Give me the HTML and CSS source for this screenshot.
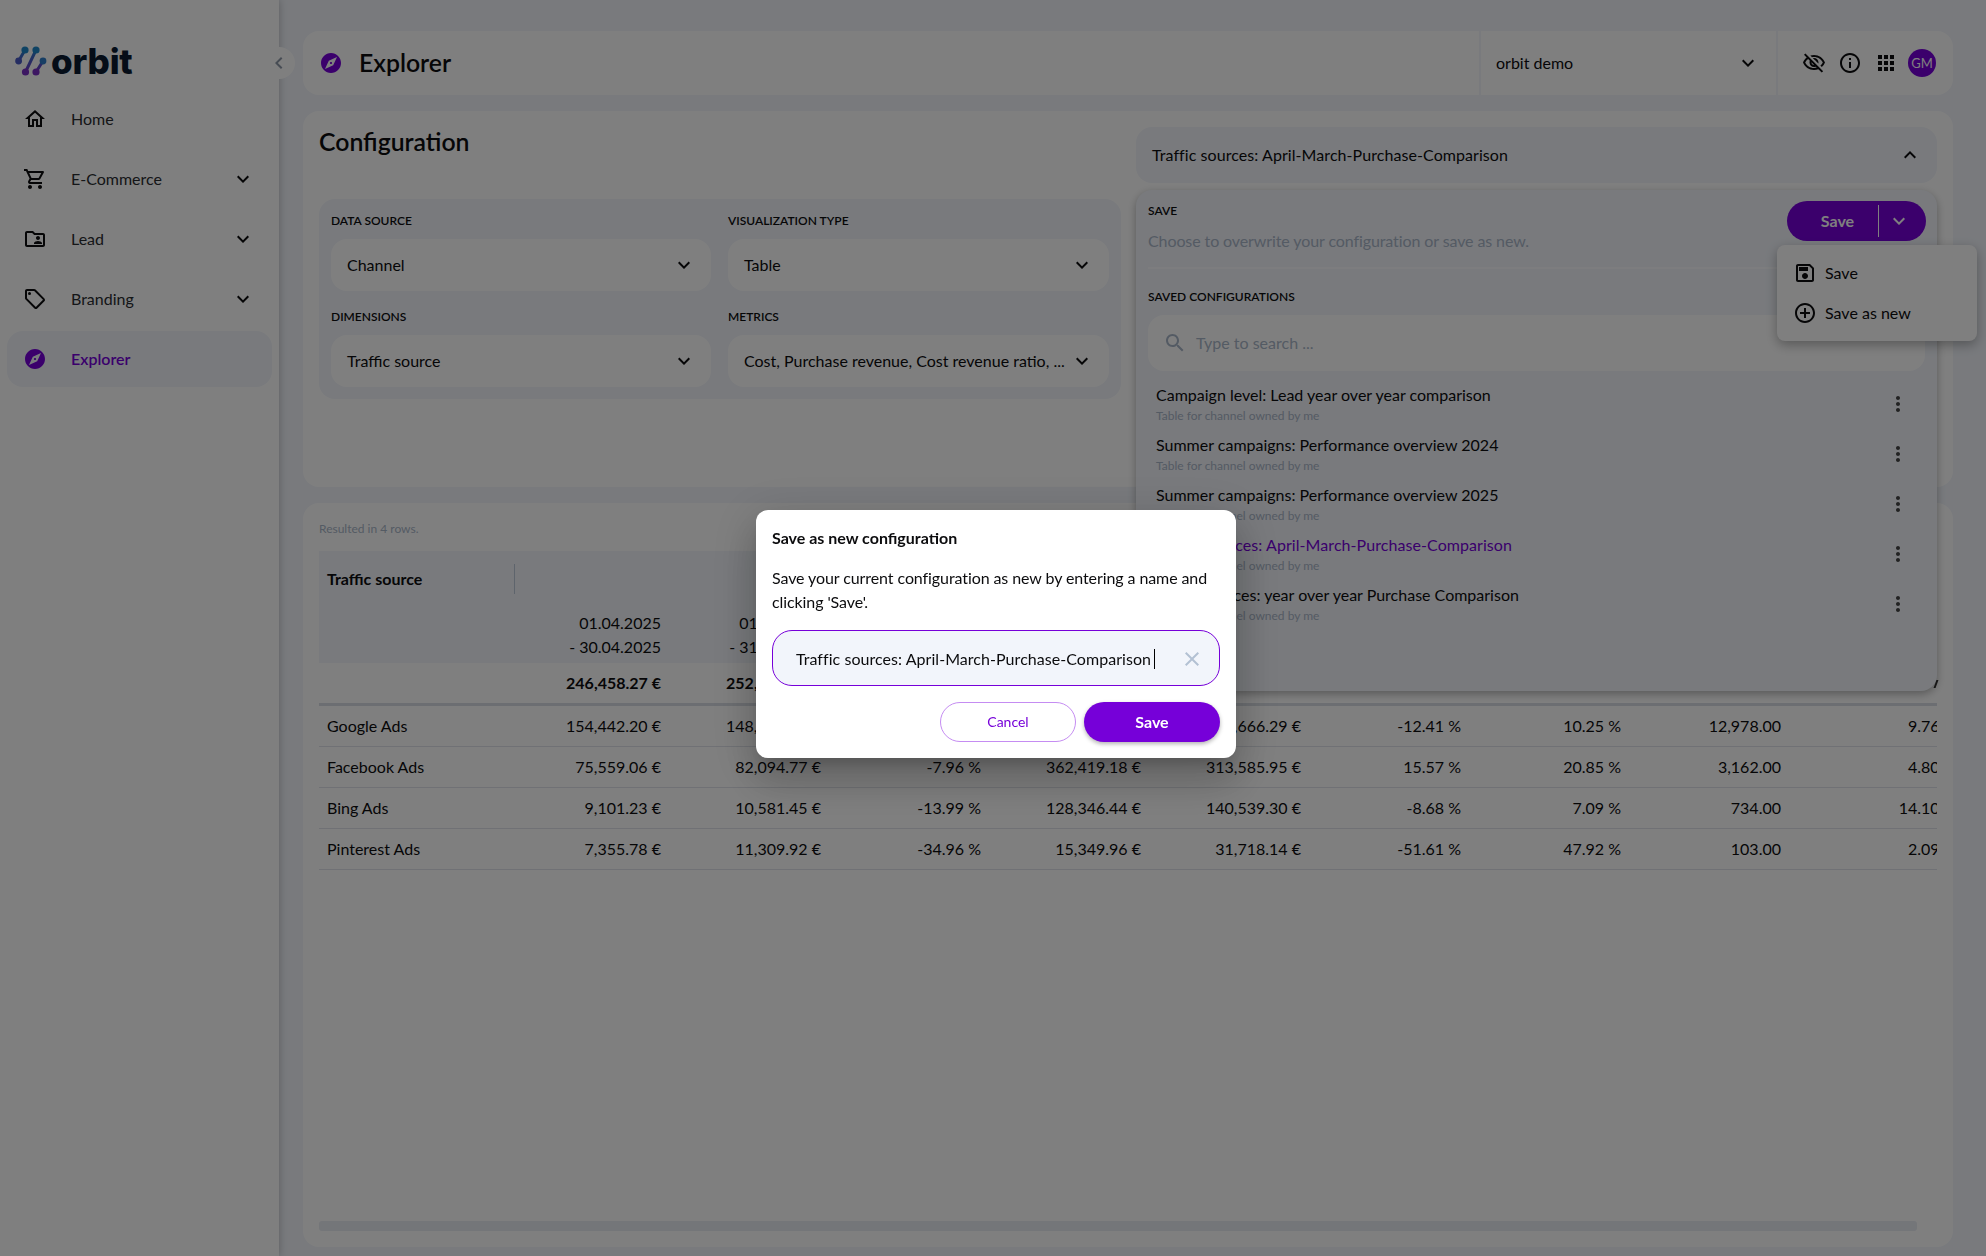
FILE: index.html
```html
<!DOCTYPE html>
<html lang="en">
<head>
<meta charset="utf-8">
<title>Explorer</title>
<link rel="stylesheet" href="styles.css">
</head>
<body>
<div class="app">
  <aside class="sidebar">
    <div class="logo">
      <svg class="logo-mark" viewBox="0 0 32 30" aria-hidden="true">
        <defs><linearGradient id="lg" gradientUnits="userSpaceOnUse" x1="0" y1="2" x2="0" y2="28"><stop offset="0" stop-color="#1f86c8"/><stop offset="1" stop-color="#7a2fc4"/></linearGradient></defs>
        <g fill="none" stroke="url(#lg)" stroke-width="3" stroke-linecap="round">
          <path d="M10 4L3.600 15"/><path d="M21 4L10.500 26"/><path d="M28 15L21 26"/>
        </g>
        <g>
          <circle cx="10" cy="4" r="3.600" fill="#1f86c8"/><circle cx="21" cy="4" r="3.600" fill="#1f86c8"/>
          <circle cx="3.600" cy="15" r="3.400" fill="#4b5bc4"/><circle cx="28" cy="15" r="3.400" fill="#2f7cc8"/>
          <circle cx="10.500" cy="26" r="3.600" fill="#7a2fc4"/><circle cx="21" cy="26" r="3.600" fill="#7a2fc4"/>
        </g>
      </svg>
      <span class="logo-text">orbit</span>
    </div>
    <nav class="nav">
      <a class="nav-item"><svg class="ic" viewBox="0 0 24 24"><path d="M12 5.690l5 4.500V18h-2v-6H9v6H7v-7.810l5-4.500M12 3L2 12h3v8h6v-6h2v6h6v-8h3L12 3z"/></svg><span>Home</span></a>
      <a class="nav-item"><svg class="ic" viewBox="0 0 24 24"><path d="M15.550 13c.75 0 1.410-.41 1.750-1.030l3.580-6.490c.37-.66-.11-1.480-.87-1.480H5.210l-.94-2H1v2h2l3.600 7.590-1.350 2.440C4.520 15.370 5.480 17 7 17h12v-2H7l1.100-2h7.450zM6.160 6h12.150l-2.760 5H8.530L6.160 6zM7 18c-1.100 0-1.990.9-1.990 2S5.900 22 7 22s2-.9 2-2-.9-2-2-2zm10 0c-1.100 0-1.990.9-1.990 2s.89 2 1.990 2 2-.9 2-2-.9-2-2-2z"/></svg><span>E-Commerce</span><svg class="ic chev" viewBox="0 0 24 24"><path d="M16.590 8.590L12 13.170 7.410 8.590 6 10l6 6 6-6z"/></svg></a>
      <a class="nav-item"><svg class="ic" viewBox="0 0 24 24"><path d="M20 6h-8l-2-2H4c-1.100 0-2 .9-2 2v12c0 1.100.9 2 2 2h16c1.100 0 2-.9 2-2V8c0-1.100-.9-2-2-2zm0 12H4V6h5.170l2 2H20v10zm-5-5c1.100 0 2-.9 2-2s-.9-2-2-2-2 .9-2 2 .9 2 2 2zm-4 4h8v-1c0-1.330-2.670-2-4-2s-4 .67-4 2v1z"/></svg><span>Lead</span><svg class="ic chev" viewBox="0 0 24 24"><path d="M16.590 8.590L12 13.170 7.410 8.590 6 10l6 6 6-6z"/></svg></a>
      <a class="nav-item"><svg class="ic" viewBox="0 0 24 24"><path d="M21.410 11.410l-8.830-8.830C12.210 2.210 11.700 2 11.170 2H4c-1.100 0-2 .9-2 2v7.170c0 .53.21 1.040.59 1.410l8.830 8.830c.78.78 2.050.78 2.830 0l7.170-7.170c.78-.78.78-2.040-.01-2.830zM12.830 20L4 11.170V4h7.170L20 12.830 12.830 20z"/><circle cx="6.500" cy="6.500" r="1.500"/></svg><span>Branding</span><svg class="ic chev" viewBox="0 0 24 24"><path d="M16.590 8.590L12 13.170 7.410 8.590 6 10l6 6 6-6z"/></svg></a>
      <a class="nav-item active"><svg class="ic" viewBox="0 0 24 24"><path d="M12 10.900c-.61 0-1.100.49-1.100 1.100s.49 1.100 1.100 1.100c.61 0 1.100-.49 1.100-1.100s-.49-1.100-1.100-1.100zM12 2C6.480 2 2 6.480 2 12s4.480 10 10 10 10-4.480 10-10S17.520 2 12 2zm2.190 12.190L6 18l3.810-8.190L18 6l-3.810 8.190z"/></svg><span>Explorer</span></a>
    </nav>
    <button class="collapse"><svg class="ic" viewBox="0 0 24 24"><path d="M15.410 7.410L14 6l-6 6 6 6 1.410-1.410L10.830 12z"/></svg></button>
  </aside>

  <main class="main">
    <header class="topbar">
      <div class="page-title">
        <svg class="ic purple" viewBox="0 0 24 24"><path d="M12 10.900c-.61 0-1.100.49-1.100 1.100s.49 1.100 1.100 1.100c.61 0 1.100-.49 1.100-1.100s-.49-1.100-1.100-1.100zM12 2C6.480 2 2 6.480 2 12s4.480 10 10 10 10-4.480 10-10S17.520 2 12 2zm2.190 12.190L6 18l3.810-8.190L18 6l-3.810 8.190z"/></svg>
        <h1>Explorer</h1>
      </div>
      <div class="account"><span>orbit demo</span><svg class="ic" viewBox="0 0 24 24"><path d="M16.590 8.590L12 13.170 7.410 8.590 6 10l6 6 6-6z"/></svg></div>
      <div class="tools">
        <svg class="ic" viewBox="0 0 24 24"><path d="M12 6c3.790 0 7.170 2.130 8.820 5.500-.59 1.220-1.420 2.270-2.410 3.120l1.410 1.410c1.390-1.230 2.490-2.770 3.180-4.530C21.270 7.110 17 4 12 4c-1.270 0-2.490.2-3.640.57l1.650 1.650C10.660 6.090 11.320 6 12 6zm-1.070 1.140L13 9.210c.57.25 1.030.71 1.280 1.280l2.070 2.070c.08-.34.14-.7.14-1.070C16.500 9.010 14.480 7 12 7c-.37 0-.72.05-1.070.14zM2.010 3.870l2.680 2.680C3.060 7.830 1.770 9.530 1 11.500 2.730 15.890 7 19 12 19c1.520 0 2.980-.29 4.320-.82l3.420 3.420 1.410-1.410L3.420 2.450 2.010 3.870zm7.500 7.500l2.610 2.610c-.04.01-.08.02-.12.02-1.380 0-2.500-1.120-2.500-2.500 0-.05.01-.08.01-.13zm-3.400-3.400l1.750 1.750c-.23.55-.36 1.150-.36 1.780 0 2.480 2.020 4.500 4.500 4.500.63 0 1.230-.13 1.770-.36l.98.98c-.88.24-1.800.38-2.750.38-3.790 0-7.170-2.130-8.820-5.500.7-1.430 1.720-2.610 2.930-3.530z"/></svg>
        <svg class="ic" viewBox="0 0 24 24"><path d="M11 7h2v2h-2zm0 4h2v6h-2zm1-9C6.480 2 2 6.480 2 12s4.480 10 10 10 10-4.480 10-10S17.520 2 12 2zm0 18c-4.410 0-8-3.590-8-8s3.590-8 8-8 8 3.590 8 8-3.590 8-8 8z"/></svg>
        <svg class="ic" viewBox="0 0 24 24"><path d="M4 8h4V4H4v4zm6 12h4v-4h-4v4zm-6 0h4v-4H4v4zm0-6h4v-4H4v4zm6 0h4v-4h-4v4zm6-10v4h4V4h-4zm-6 4h4V4h-4v4zm6 6h4v-4h-4v4zm0 6h4v-4h-4v4z"/></svg>
        <span class="avatar">GM</span>
      </div>
    </header>

    <section class="panel config">
      <div class="config-left">
        <h2>Configuration</h2>
        <div class="fields">
          <div class="field"><label>DATA SOURCE</label><div class="select"><span>Channel</span><svg class="ic" viewBox="0 0 24 24"><path d="M16.590 8.590L12 13.170 7.410 8.590 6 10l6 6 6-6z"/></svg></div></div>
          <div class="field"><label>VISUALIZATION TYPE</label><div class="select"><span>Table</span><svg class="ic" viewBox="0 0 24 24"><path d="M16.590 8.590L12 13.170 7.410 8.590 6 10l6 6 6-6z"/></svg></div></div>
          <div class="field"><label>DIMENSIONS</label><div class="select"><span>Traffic source</span><svg class="ic" viewBox="0 0 24 24"><path d="M16.590 8.590L12 13.170 7.410 8.590 6 10l6 6 6-6z"/></svg></div></div>
          <div class="field"><label>METRICS</label><div class="select"><span>Cost, Purchase revenue, Cost revenue ratio, ...</span><svg class="ic" viewBox="0 0 24 24"><path d="M16.590 8.590L12 13.170 7.410 8.590 6 10l6 6 6-6z"/></svg></div></div>
        </div>
      </div>
      <div class="config-right">
        <div class="saved-head"><span>Traffic sources: April-March-Purchase-Comparison</span><svg class="ic" viewBox="0 0 24 24"><path d="M12 8l-6 6 1.410 1.410L12 10.830l4.590 4.580L18 14z"/></svg></div>
        <div class="popover">
          <div class="save-row">
            <div>
              <div class="caption">SAVE</div>
              <p class="hint">Choose to overwrite your configuration or save as new.</p>
            </div>
            <div class="split-btn"><span class="split-main">Save</span><span class="split-arrow"><svg class="ic" viewBox="0 0 24 24"><path d="M16.590 8.590L12 13.170 7.410 8.590 6 10l6 6 6-6z"/></svg></span></div>
          </div>
          <div class="caption saved-caption">SAVED CONFIGURATIONS</div>
          <div class="search"><svg class="ic" viewBox="0 0 24 24"><path d="M15.500 14h-.79l-.28-.27C15.410 12.590 16 11.110 16 9.500 16 5.910 13.090 3 9.500 3S3 5.910 3 9.500 5.910 16 9.500 16c1.610 0 3.090-.59 4.230-1.570l.27.28v.79l5 4.990L20.490 19l-4.990-5zm-6 0C7.010 14 5 11.990 5 9.500S7.010 5 9.500 5 14 7.010 14 9.500 11.990 14 9.500 14z"/></svg><span>Type to search ...</span></div>
          <ul class="configs">
            <li><div><div class="cfg-name">Campaign level: Lead year over year comparison</div><div class="cfg-sub">Table for channel owned by me</div></div><svg class="ic dots" viewBox="0 0 24 24"><path d="M12 8c1.100 0 2-.9 2-2s-.9-2-2-2-2 .9-2 2 .9 2 2 2zm0 2c-1.100 0-2 .9-2 2s.9 2 2 2 2-.9 2-2-.9-2-2-2zm0 6c-1.100 0-2 .9-2 2s.9 2 2 2 2-.9 2-2-.9-2-2-2z"/></svg></li>
            <li><div><div class="cfg-name">Summer campaigns: Performance overview 2024</div><div class="cfg-sub">Table for channel owned by me</div></div><svg class="ic dots" viewBox="0 0 24 24"><path d="M12 8c1.100 0 2-.9 2-2s-.9-2-2-2-2 .9-2 2 .9 2 2 2zm0 2c-1.100 0-2 .9-2 2s.9 2 2 2 2-.9 2-2-.9-2-2-2zm0 6c-1.100 0-2 .9-2 2s.9 2 2 2 2-.9 2-2-.9-2-2-2z"/></svg></li>
            <li><div><div class="cfg-name">Summer campaigns: Performance overview 2025</div><div class="cfg-sub">Table for channel owned by me</div></div><svg class="ic dots" viewBox="0 0 24 24"><path d="M12 8c1.100 0 2-.9 2-2s-.9-2-2-2-2 .9-2 2 .9 2 2 2zm0 2c-1.100 0-2 .9-2 2s.9 2 2 2 2-.9 2-2-.9-2-2-2zm0 6c-1.100 0-2 .9-2 2s.9 2 2 2 2-.9 2-2-.9-2-2-2z"/></svg></li>
            <li class="selected"><div><div class="cfg-name">Traffic sources: April-March-Purchase-Comparison</div><div class="cfg-sub">Table for channel owned by me</div></div><svg class="ic dots" viewBox="0 0 24 24"><path d="M12 8c1.100 0 2-.9 2-2s-.9-2-2-2-2 .9-2 2 .9 2 2 2zm0 2c-1.100 0-2 .9-2 2s.9 2 2 2 2-.9 2-2-.9-2-2-2zm0 6c-1.100 0-2 .9-2 2s.9 2 2 2 2-.9 2-2-.9-2-2-2z"/></svg></li>
            <li><div><div class="cfg-name">Traffic sources: year over year Purchase Comparison</div><div class="cfg-sub">Table for channel owned by me</div></div><svg class="ic dots" viewBox="0 0 24 24"><path d="M12 8c1.100 0 2-.9 2-2s-.9-2-2-2-2 .9-2 2 .9 2 2 2zm0 2c-1.100 0-2 .9-2 2s.9 2 2 2 2-.9 2-2-.9-2-2-2zm0 6c-1.100 0-2 .9-2 2s.9 2 2 2 2-.9 2-2-.9-2-2-2z"/></svg></li>
          </ul>
          <span class="resize-tick"></span>
          <div class="menu">
            <div class="menu-item"><svg class="ic" viewBox="0 0 24 24"><path d="M17 3H5c-1.110 0-2 .9-2 2v14c0 1.100.89 2 2 2h14c1.100 0 2-.9 2-2V7l-4-4zm2 16H5V5h11.170L19 7.830V19zm-7-7c-1.660 0-3 1.340-3 3s1.340 3 3 3 3-1.340 3-3-1.340-3-3-3zM6 6h9v4H6z"/></svg><span>Save</span></div>
            <div class="menu-item"><svg class="ic" viewBox="0 0 24 24"><path d="M13 7h-2v4H7v2h4v4h2v-4h4v-2h-4V7zm-1-5C6.480 2 2 6.480 2 12s4.480 10 10 10 10-4.480 10-10S17.520 2 12 2zm0 18c-4.410 0-8-3.590-8-8s3.590-8 8-8 8 3.590 8 8-3.590 8-8 8z"/></svg><span>Save as new</span></div>
          </div>
        </div>
      </div>
    </section>

    <section class="panel results">
      <div class="result-note">Resulted in 4 rows.</div>
      <div class="table-wrap">
        <table class="table">
          <colgroup><col class="col-name"><col><col><col><col><col><col><col><col><col class="col-last"></colgroup>
          <thead>
            <tr class="head-1"><th colspan="2"><span class="th-label">Traffic source</span></th><th colspan="8"></th></tr>
            <tr class="head-2"><th></th><th>01.04.2025<br>- 30.04.2025</th><th>01.03.2025<br>- 31.03.2025</th><th colspan="7"></th></tr>
          </thead>
          <tbody>
            <tr class="total"><td></td><td>246,458.27 €</td><td>252,396.04 €</td><td colspan="7"></td></tr>
            <tr><td>Google Ads</td><td>154,442.20 €</td><td>148,912.35 €</td><td>3.71 %</td><td>124,967.28 €</td><td>142,666.29 €</td><td>-12.41 %</td><td>10.25 %</td><td>12,978.00</td><td>9.76 €</td></tr>
            <tr><td>Facebook Ads</td><td>75,559.06 €</td><td>82,094.77 €</td><td>-7.96 %</td><td>362,419.18 €</td><td>313,585.95 €</td><td>15.57 %</td><td>20.85 %</td><td>3,162.00</td><td>4.80 €</td></tr>
            <tr><td>Bing Ads</td><td>9,101.23 €</td><td>10,581.45 €</td><td>-13.99 %</td><td>128,346.44 €</td><td>140,539.30 €</td><td>-8.68 %</td><td>7.09 %</td><td>734.00</td><td>14.10 €</td></tr>
            <tr><td>Pinterest Ads</td><td>7,355.78 €</td><td>11,309.92 €</td><td>-34.96 %</td><td>15,349.96 €</td><td>31,718.14 €</td><td>-51.61 %</td><td>47.92 %</td><td>103.00</td><td>2.09 €</td></tr>
          </tbody>
        </table>
      </div>
      <div class="scrollbar"></div>
    </section>
  </main>
</div>

<div class="overlay">
  <div class="dialog">
    <h3>Save as new configuration</h3>
    <p>Save your current configuration as new by entering a name and clicking 'Save'.</p>
    <div class="name-input"><span class="name-text">Traffic sources: April-March-Purchase-Comparison</span><svg class="ic clear" viewBox="0 0 24 24"><path d="M19 6.410L17.590 5 12 10.590 6.410 5 5 6.410 10.590 12 5 17.590 6.410 19 12 13.410 17.590 19 19 17.590 13.410 12z"/></svg></div>
    <div class="dialog-actions">
      <button class="btn btn-ghost">Cancel</button>
      <button class="btn btn-solid">Save</button>
    </div>
  </div>
</div>
</body>
</html>
```
FILE: styles.css
```css
* { box-sizing: border-box; }
html, body { margin: 0; height: 100%; }
body {
  font-family: "Lato", "Liberation Sans", sans-serif;
  font-size: 16px;
  line-height: 24px;
  color: #0c0c0e;
  background: #f2f5fb;
  overflow: hidden;
}
.ic { width: 24px; height: 24px; fill: currentColor; flex: none; display: block; }

.app { display: flex; height: 1256px; }

/* sidebar */
.sidebar {
  position: relative;
  width: 279px;
  flex: none;
  background: #fff;
  box-shadow: 0 0 8px rgba(0,0,0,.25);
  padding: 47px 7px 0;
  z-index: 2;
}
.logo { display: flex; align-items: center; gap: 4px; height: 28px; padding-left: 8px; }
.logo-mark { width: 32px; height: 30px; flex: none; }
.logo-text { font-family: "Inter", sans-serif; font-weight: 800; font-size: 35px; line-height: 28px; color: #0b1a30; letter-spacing: -0.2px; }
.nav { display: flex; flex-direction: column; margin-top: 16px; }
.nav-item { display: flex; align-items: center; height: 56px; margin-bottom: 4px; padding: 0 12px 0 16px; border-radius: 16px; color: #2a2c30; }
.nav-item .ic:first-child { margin-right: 24px; color: #0c0c0e; }
.nav-item .chev { margin-left: auto; color: #0c0c0e; margin-right: 5px; }
.nav-item.active { background: #f2f5fb; color: #7600d9; font-weight: 600; }
.nav-item.active .ic:first-child { color: #7600d9; }
.collapse {
  position: absolute;
  left: 263px;
  top: 47px;
  width: 32px;
  height: 32px;
  padding: 4px;
  border: 0;
  border-radius: 50%;
  background: #fff;
  color: #8e99a8;
}

/* main column */
.main { flex: 1; min-width: 0; display: flex; flex-direction: column; gap: 16px; padding: 31px 33px 9px 24px; }
.topbar { height: 64px; flex: none; display: flex; align-items: stretch; background: #fff; border-radius: 16px; }
.page-title { flex: 1; display: flex; align-items: center; gap: 16px; padding-left: 16px; }
.page-title .purple { color: #7600d9; }
.page-title h1 { margin: 0 0 1px; font-size: 24.800px; line-height: 31px; font-weight: 600; }
.account { width: 299px; display: flex; align-items: center; justify-content: space-between; padding: 0 16px 0 15px; border-left: 2px solid #f2f5fb; border-right: 2px solid #f2f5fb; }
.tools { width: 175px; display: flex; align-items: center; gap: 12px; padding-left: 24px; }
.avatar { width: 28px; height: 28px; border-radius: 50%; background: #7600d9; color: #fff; font-size: 13px; line-height: 28px; text-align: center; margin-left: -2px; }

.panel { background: #fff; border-radius: 16px; }

/* configuration */
.config { height: 376px; flex: none; display: grid; grid-template-columns: 802px 801px; column-gap: 15px; padding: 16px; position: relative; z-index: 1; }
.config h2 { margin: 0 0 42px; font-size: 24.800px; line-height: 30px; font-weight: 600; }
.fields { display: grid; grid-template-columns: 380px 381px; column-gap: 17px; row-gap: 16px; padding: 12px; background: #f2f5fb; border-radius: 16px; }
.field label { display: block; font-size: 12px; line-height: 20px; font-weight: 600; margin-bottom: 8px; }
.select { display: flex; align-items: center; justify-content: space-between; height: 52px; padding: 0 15px 0 16px; background: #fff; border-radius: 16px; }
.select span { white-space: nowrap; }

.config-right { position: relative; }
.saved-head { height: 56px; display: flex; align-items: center; justify-content: space-between; padding: 0 15px 0 16px; background: #f2f5fb; border-radius: 16px; letter-spacing: .07px; }
.popover { position: absolute; left: 0; right: 0; top: 63px; height: 501px; padding: 11px 12px 0; background: #f2f5fb; border-radius: 16px; box-shadow: 0 3px 8px rgba(0,0,0,.3); letter-spacing: 0; }
.save-row { display: flex; justify-content: space-between; height: 68px; border-bottom: 2px solid #fafbfe; }
.caption { font-size: 12px; line-height: 20px; font-weight: 600; }
.hint { margin: 8px 0 0; color: #a9b6c8; letter-spacing: -.1px; }
.split-btn { display: flex; align-items: center; width: 139px; height: 40px; margin-right: -1px; border-radius: 20px; background: #7600d9; color: #fff; }
.split-main { width: 92px; padding-left: 10px; text-align: center; font-weight: 700; border-right: 1px solid #fff; line-height: 32px; }
.split-arrow { flex: 1; display: flex; justify-content: center; padding-right: 7px; }
.saved-caption { margin-top: 18px; }
.search { display: flex; align-items: center; gap: 9px; height: 56px; margin-top: 8px; padding-left: 15px; background: #fff; border-radius: 16px; color: #a9b6c8; }
.configs { list-style: none; margin: 12px 0 0; padding: 0 0 0 8px; }
.configs li { display: flex; align-items: center; justify-content: space-between; height: 40px; margin-bottom: 10px; padding-right: 15px; }
.cfg-name { line-height: 24px; }
.cfg-sub { font-size: 12px; line-height: 16px; margin-top: 1px; color: #a9b6c8; }
.selected .cfg-name { color: #7600d9; letter-spacing: .07px; }
.dots { color: #444; margin-top: 1px; }
.resize-tick { position: absolute; right: 0; bottom: 3px; width: 2px; height: 8px; background: #000; transform: skewX(-20deg); opacity: .8; }
.menu { position: absolute; right: -40px; top: 55px; width: 200px; padding: 8px 0; background: #fff; border-radius: 8px; box-shadow: 0 4px 12px rgba(0,0,0,.3); }
.menu-item { display: flex; align-items: center; gap: 8px; height: 40px; padding-left: 16px; }

/* results */
.results { flex: 1; min-height: 0; display: flex; flex-direction: column; padding: 16px; }
.result-note { font-size: 12px; line-height: 20px; color: #a9b6c8; margin-bottom: 12px; }
.table-wrap { overflow: hidden; }
.table { width: 1634px; table-layout: fixed; border-collapse: separate; border-spacing: 0; }
.table col { width: 160px; }
.table .col-name { width: 182px; }
.table .col-last { width: 172px; }
.table th { background: #f2f5fb; font-weight: 400; padding: 0; text-align: right; }
.head-1 th { height: 56px; text-align: left; }
.th-label { display: block; width: 196px; height: 30px; padding-left: 8px; line-height: 30px; font-weight: 700; border-right: 1px solid #bcc8d8; }
.head-2 th { height: 56px; }
.table td { height: 41px; padding: 0; text-align: right; border-bottom: 1px solid #e0e3ea; white-space: nowrap; }
.table td:first-child { text-align: left; padding-left: 8px; }
.total td { height: 43px; font-weight: 700; border-bottom: 3px solid #d9dde4; }
.scrollbar { margin: auto 20px 0 0; height: 10px; border-radius: 3px; background: #e9ecf3; }

/* modal */
.overlay { position: fixed; inset: 0; z-index: 10; display: flex; align-items: center; justify-content: center; padding: 12px 0 0 6px; background: rgba(0,0,0,.5); }
.dialog { width: 480px; height: 248px; padding: 16px; background: #fff; border-radius: 12px; box-shadow: 0 11px 15px -7px rgba(0,0,0,.2), 0 24px 38px 3px rgba(0,0,0,.14), 0 9px 46px 8px rgba(0,0,0,.12); }
.dialog h3 { margin: 0; font-size: 16px; line-height: 24px; font-weight: 700; }
.dialog p { margin: 16px 0 0; letter-spacing: -.09px; }
.name-input { display: flex; align-items: center; height: 56px; margin-top: 16px; padding: 1px 15px 0 23px; border: 1px solid #7600d9; border-radius: 20px; background: #f2f5fb; }
.name-text { flex: 1; white-space: nowrap; letter-spacing: .05px; }
.name-text::after { content: ""; display: inline-block; width: 1px; height: 20px; margin-left: 3px; background: #000; vertical-align: -4px; }
.clear { color: #b3c1d3; }
.dialog-actions { display: flex; justify-content: flex-end; gap: 8px; margin-top: 16px; }
.btn { width: 136px; height: 40px; border-radius: 20px; font-family: inherit; padding: 0 0 2px; }
.btn-ghost { background: #fff; border: 1px solid #c58cf2; color: #7600d9; font-size: 14px; }
.btn-solid { background: #7600d9; border: 0; color: #fff; font-size: 16px; font-weight: 700; box-shadow: 0 2px 4px rgba(0,0,0,.3); }
```
